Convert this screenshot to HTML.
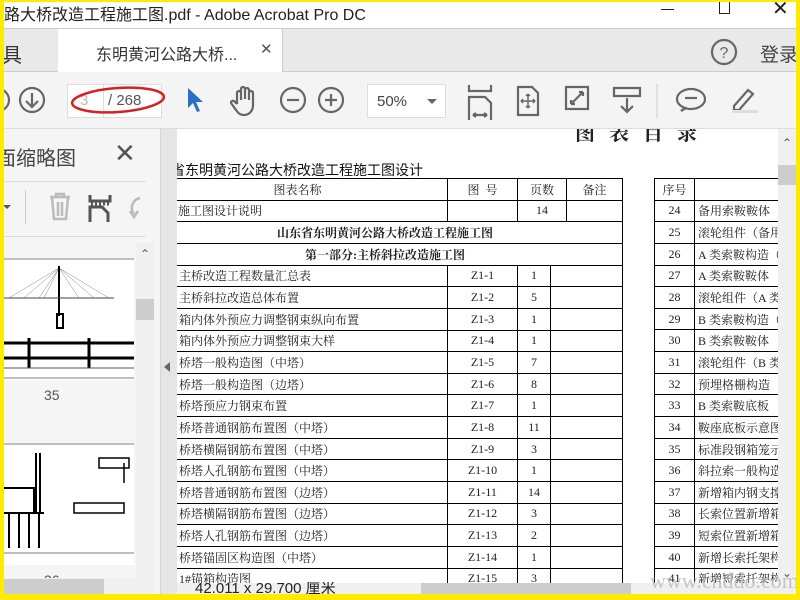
<!DOCTYPE html>
<html><head><meta charset="utf-8">
<style>
*{margin:0;padding:0;box-sizing:border-box}
body{width:800px;height:600px;overflow:hidden;background:#fff;position:relative;font-family:"Liberation Sans","Noto Sans CJK SC",sans-serif}
.a{position:absolute}
.ser{font-family:"Liberation Serif","Noto Serif CJK SC",serif}
table{border-collapse:collapse;position:absolute;table-layout:fixed}
td{border:1px solid #000;height:21.65px;font-size:12px;color:#222;padding:0;white-space:nowrap;overflow:hidden;font-family:"Liberation Serif","Noto Serif CJK SC",serif}
td.c{text-align:center}
td.b{font-weight:bold;text-align:center}
.ic{stroke:#666;fill:none;stroke-width:2.2}
</style></head><body>
<!-- title bar -->
<div class="a" style="left:0;top:0;width:800px;height:28px;background:#fff"></div>
<div class="a" style="left:4px;top:1px;font-size:16px;color:#222;white-space:nowrap">路大桥改造工程施工图.pdf - Adobe Acrobat Pro DC</div>
<div class="a" style="left:661px;top:9px;width:13px;height:1px;background:#222"></div>
<div class="a" style="left:719px;top:2px;width:11px;height:12px;border:1px solid #222;border-top:none"></div>
<div class="a" style="left:772px;top:-4px;font-size:20px;color:#222">✕</div>
<!-- tab bar -->
<div class="a" style="left:0;top:28px;width:800px;height:44px;background:#e9e9e9;border-top:1px solid #ccc;border-bottom:1px solid #ccc"></div>
<div class="a" style="left:58px;top:29px;width:225px;height:43px;background:#fff;border-right:1px solid #ccc"></div>
<div class="a" style="left:2px;top:39px;font-size:20px;color:#333">具</div>
<div class="a" style="left:96px;top:41px;font-size:16px;color:#333">东明黄河公路大桥...</div>
<div class="a" style="left:260px;top:40px;font-size:15px;color:#555">✕</div>
<svg class="a" style="left:710px;top:38px" width="28" height="28"><circle cx="14" cy="14" r="12" class="ic"/><text x="14" y="20" font-size="16" text-anchor="middle" fill="#666" font-family="Liberation Sans">?</text></svg>
<div class="a" style="left:760px;top:40px;font-size:19px;color:#444">登录</div>
<!-- toolbar -->
<div class="a" style="left:0;top:72px;width:800px;height:57px;background:#f4f4f4;border-bottom:1px solid #ddd"></div>
<svg class="a" style="left:0;top:86px" width="50" height="30"><circle cx="-2" cy="14" r="11" class="ic"/><circle cx="32" cy="14" r="12" class="ic"/><path d="M32 7v13M26 15l6 6 6-6" class="ic"/></svg>
<div class="a" style="left:67px;top:84px;width:95px;height:34px;background:#fff;border:1px solid #ddd"></div>
<div class="a" style="left:103px;top:84px;width:1px;height:34px;background:#ddd"></div>
<div class="a" style="left:80px;top:92px;font-size:15px;color:#bbb">3</div>
<div class="a" style="left:108px;top:92px;font-size:15px;color:#555">/ 268</div>
<div class="a" style="left:161px;top:84px;width:1px;height:34px;background:#ddd"></div>
<svg class="a" style="left:66px;top:80px" width="110" height="42"><ellipse cx="52" cy="20" rx="46" ry="12" fill="none" stroke="#d62020" stroke-width="2.5" transform="rotate(-4 52 20)"/></svg>
<svg class="a" style="left:185px;top:86px" width="22" height="30"><path d="M3 2 L3 22 L8 17 L12 26 L15 25 L11 16 L18 16 Z" fill="#2a6fc8"/></svg>
<svg class="a" style="left:230px;top:84px" width="30" height="34"><path d="M7 20V9a2 2 0 014 0v7V5a2 2 0 014 0v10V6a2 2 0 014 0v10V9a2 2 0 014 0v12c0 6-4 10-9 10-4 0-6-2-8-5l-5-7a2 2 0 013-2l3 3" class="ic" stroke-width="2"/></svg>
<svg class="a" style="left:279px;top:86px" width="70" height="30"><circle cx="14" cy="14" r="12" class="ic"/><path d="M8 14h12" class="ic"/><circle cx="52" cy="14" r="12" class="ic"/><path d="M46 14h12M52 8v12" class="ic"/></svg>
<div class="a" style="left:367px;top:84px;width:79px;height:34px;background:#fff;border:1px solid #ddd"></div>
<div class="a" style="left:377px;top:93px;font-size:15px;color:#444">50%</div>
<div class="a" style="left:427px;top:99px;border-left:5px solid transparent;border-right:5px solid transparent;border-top:5px solid #666"></div>
<svg class="a" style="left:466px;top:84px" width="300" height="36"><path d="M3 1v6h22V1M3 36V13h16l6 6v17M7 31h14M7 31l3-2M7 31l3 2M21 31l-3-2M21 31l-3 2" class="ic"/>
<path d="M52 3h14l6 6v22H52z" class="ic"/><path d="M62 10v14M55 17h14M62 10l-2 2M62 10l2 2M62 24l-2-2M62 24l2-2M55 17l2-2M55 17l2 2M69 17l-2-2M69 17l-2 2" stroke="#666" stroke-width="1.5" fill="none"/>
<path d="M100 3h22v22h-22z" class="ic"/><path d="M105 20l6-6M105 20v-4M105 20h4M117 8l-6 6M117 8v4M117 8h-4" class="ic"/>
<path d="M148 4h26v8h-26z" class="ic"/><path d="M161 14v14M155 22l6 6 6-6" class="ic"/>
<path d="M191 0v34" stroke="#ccc" stroke-width="1"/>
<path d="M219 24c-5-2-8-5-8-9 0-6 7-10 14-10s14 4 14 10-7 10-14 10c-2 0-4 0-5-1l-5 3z" class="ic"/><path d="M219 14h12" class="ic"/>
<path d="M268 22l14-16 5 4-14 16h-5z" class="ic"/><rect x="266" y="26" width="26" height="3" fill="#ddd"/></svg>
<!-- left panel -->
<div class="a" style="left:0;top:129px;width:160px;height:471px;background:#f5f5f5"></div>
<div class="a" style="left:160px;top:129px;width:17px;height:471px;background:#e5e5e5;border-left:1px solid #d6d6d6"></div>
<div class="a" style="left:164px;top:362px;border-top:5px solid transparent;border-bottom:5px solid transparent;border-right:6px solid #666"></div>
<div class="a" style="left:-4px;top:142px;font-size:20px;color:#444">面缩略图</div>
<div class="a" style="left:114px;top:138px;font-size:26px;color:#555;font-weight:300">✕</div>
<div class="a" style="left:4px;top:181px;width:142px;height:1px;background:#ddd"></div>
<div class="a" style="left:3px;top:205px;border-left:4px solid transparent;border-right:4px solid transparent;border-top:4px solid #555"></div>
<div class="a" style="left:25px;top:190px;width:1px;height:34px;background:#ccc"></div>
<svg class="a" style="left:44px;top:190px" width="110" height="36"><path d="M6 7h20M12 7V4h8v3M8 8l2 21h12l2-21M14 12v14M18 12v14" stroke="#bbb" stroke-width="2.5" fill="none"/>
<path d="M46 5v6h20V5M46 32V17h12l6 6v9M47 14h2M51 14h2M55 14h2M59 14h2M63 14h2" stroke="#555" stroke-width="3" fill="none"/>
<path d="M96 8a10 10 0 00-6 16M86 21l4 6 4-6" stroke="#bbb" stroke-width="2.5" fill="none"/></svg>
<div class="a" style="left:4px;top:236px;width:142px;height:1px;background:#ddd"></div>
<div class="a" style="left:4px;top:243px;width:132px;height:335px;background:#f5f5f5"></div>
<!-- thumbnails -->
<svg class="a" style="left:4px;top:258px" width="130" height="122"><rect width="130" height="122" fill="#fff"/><path d="M0 1h130M0 120h130" stroke="#999" stroke-width="1.2"/>
<g stroke="#888" stroke-width="0.5" fill="none"><path d="M55 10L5 40M55 10L20 40M55 10L35 40M55 10L105 40M55 10L90 40M55 10L75 40M55 10L40 40"/></g>
<path d="M55 8v50M53 56h6v14h-6z" stroke="#000" stroke-width="2" fill="none"/><path d="M0 40h110" stroke="#444"/>
<path d="M0 85h130M0 100h130" stroke="#000" stroke-width="3"/><path d="M25 80v30M85 80v30" stroke="#000" stroke-width="3"/><path d="M0 110h130" stroke="#555"/></svg>
<div class="a" style="left:44px;top:387px;font-size:14px;color:#555">35</div>
<svg class="a" style="left:4px;top:443px" width="130" height="122"><rect width="130" height="122" fill="#fff"/><path d="M0 1h130M0 110h130" stroke="#999" stroke-width="1.2"/>
<path d="M32 10v60M36 10v60M0 70h40M5 70v35M15 70v35M25 70v35M35 70v35M0 45h30v25" stroke="#000" stroke-width="2" fill="none"/>
<path d="M95 15h30v10h-30zM70 60h50v10H70zM120 20v20" stroke="#000" stroke-width="1.5" fill="none"/></svg>
<div class="a" style="left:44px;top:572px;font-size:14px;color:#555">36</div>
<div class="a" style="left:136px;top:243px;width:18px;height:336px;background:#f0f0f0"></div>
<div class="a" style="left:140px;top:247px;font-size:12px;color:#555">⌃</div>
<div class="a" style="left:136px;top:299px;width:18px;height:21px;background:#cdcdcd"></div>
<div class="a" style="left:4px;top:578px;width:150px;height:16px;background:#f0f0f0"></div>
<div class="a" style="left:4px;top:579px;width:100px;height:15px;background:#cdcdcd"></div>
<!-- document area -->
<div class="a" style="left:177px;top:129px;width:601px;height:454px;background:#fff;overflow:hidden">
  <div class="a ser" style="left:398px;top:-12px;font-size:20px;font-weight:bold;color:#222;letter-spacing:14px;white-space:nowrap">图表目录</div>
  <div class="a" style="left:-6px;top:31px;font-size:14px;color:#111;white-space:nowrap">省东明黄河公路大桥改造工程施工图设计</div>
  <table style="left:-30px;top:49px;width:475px">
    <colgroup><col style="width:300px"><col style="width:70px"><col style="width:49px"><col style="width:56px"></colgroup>
    <tr><td class="c">图表名称</td><td class="c">图&nbsp;&nbsp;号</td><td class="c">页数</td><td class="c">备注</td></tr>
    <tr><td style="padding-left:30px">施工图设计说明</td><td></td><td class="c">14</td><td></td></tr>
    <tr><td colspan="4" class="b">山东省东明黄河公路大桥改造工程施工图</td></tr>
    <tr><td colspan="4" class="b">第一部分:主桥斜拉改造施工图</td></tr>
  </table>
  <table style="left:-30px;top:135.6px;width:475px">
    <colgroup><col style="width:300px"><col style="width:70px"><col style="width:33px"><col style="width:72px"></colgroup>
    <tr><td style="padding-left:31px">主桥改造工程数量汇总表</td><td class="c">Z1-1</td><td class="c">1</td><td></td></tr>
    <tr><td style="padding-left:31px">主桥斜拉改造总体布置</td><td class="c">Z1-2</td><td class="c">5</td><td></td></tr>
    <tr><td style="padding-left:31px">箱内体外预应力调整钢束纵向布置</td><td class="c">Z1-3</td><td class="c">1</td><td></td></tr>
    <tr><td style="padding-left:31px">箱内体外预应力调整钢束大样</td><td class="c">Z1-4</td><td class="c">1</td><td></td></tr>
    <tr><td style="padding-left:31px">桥塔一般构造图（中塔）</td><td class="c">Z1-5</td><td class="c">7</td><td></td></tr>
    <tr><td style="padding-left:31px">桥塔一般构造图（边塔）</td><td class="c">Z1-6</td><td class="c">8</td><td></td></tr>
    <tr><td style="padding-left:31px">桥塔预应力钢束布置</td><td class="c">Z1-7</td><td class="c">1</td><td></td></tr>
    <tr><td style="padding-left:31px">桥塔普通钢筋布置图（中塔）</td><td class="c">Z1-8</td><td class="c">11</td><td></td></tr>
    <tr><td style="padding-left:31px">桥塔横隔钢筋布置图（中塔）</td><td class="c">Z1-9</td><td class="c">3</td><td></td></tr>
    <tr><td style="padding-left:31px">桥塔人孔钢筋布置图（中塔）</td><td class="c">Z1-10</td><td class="c">1</td><td></td></tr>
    <tr><td style="padding-left:31px">桥塔普通钢筋布置图（边塔）</td><td class="c">Z1-11</td><td class="c">14</td><td></td></tr>
    <tr><td style="padding-left:31px">桥塔横隔钢筋布置图（边塔）</td><td class="c">Z1-12</td><td class="c">3</td><td></td></tr>
    <tr><td style="padding-left:31px">桥塔人孔钢筋布置图（边塔）</td><td class="c">Z1-13</td><td class="c">2</td><td></td></tr>
    <tr><td style="padding-left:31px">桥塔锚固区构造图（中塔）</td><td class="c">Z1-14</td><td class="c">1</td><td></td></tr>
    <tr><td style="padding-left:31px">1#锚箱构造图</td><td class="c">Z1-15</td><td class="c">3</td><td></td></tr>
  </table>
  <table style="left:477px;top:49px;width:160px">
    <colgroup><col style="width:40px"><col style="width:120px"></colgroup>
    <tr><td class="c">序号</td><td></td></tr>
    <tr><td class="c">24</td><td>&nbsp;备用索鞍鞍体</td></tr>
    <tr><td class="c">25</td><td>&nbsp;滚轮组件（备用</td></tr>
    <tr><td class="c">26</td><td>&nbsp;A 类索鞍构造（</td></tr>
    <tr><td class="c">27</td><td>&nbsp;A 类索鞍鞍体</td></tr>
    <tr><td class="c">28</td><td>&nbsp;滚轮组件（A 类</td></tr>
    <tr><td class="c">29</td><td>&nbsp;B 类索鞍构造（</td></tr>
    <tr><td class="c">30</td><td>&nbsp;B 类索鞍鞍体</td></tr>
    <tr><td class="c">31</td><td>&nbsp;滚轮组件（B 类</td></tr>
    <tr><td class="c">32</td><td>&nbsp;预埋格栅构造</td></tr>
    <tr><td class="c">33</td><td>&nbsp;B 类索鞍底板</td></tr>
    <tr><td class="c">34</td><td>&nbsp;鞍座底板示意图</td></tr>
    <tr><td class="c">35</td><td>&nbsp;标准段钢箱笼示</td></tr>
    <tr><td class="c">36</td><td>&nbsp;斜拉索一般构造</td></tr>
    <tr><td class="c">37</td><td>&nbsp;新增箱内钢支撑</td></tr>
    <tr><td class="c">38</td><td>&nbsp;长索位置新增箱</td></tr>
    <tr><td class="c">39</td><td>&nbsp;短索位置新增箱</td></tr>
    <tr><td class="c">40</td><td>&nbsp;新增长索托架构</td></tr>
    <tr><td class="c">41</td><td>&nbsp;新增短索托架构</td></tr>
  </table>
</div>
<!-- right scrollbar -->
<div class="a" style="left:778px;top:129px;width:18px;height:465px;background:#f0f0f0"></div>
<div class="a" style="left:782px;top:136px;font-size:12px;color:#555">⌃</div>
<div class="a" style="left:778px;top:165px;width:18px;height:20px;background:#cdcdcd"></div>
<div class="a" style="left:782px;top:566px;font-size:12px;color:#555">⌄</div>
<!-- bottom status -->
<div class="a" style="left:177px;top:583px;width:601px;height:11px;background:#f0f0f0;overflow:hidden"></div>
<div class="a" style="left:195px;top:582px;font-size:15px;color:#222;line-height:14px;height:12px;overflow:hidden">42.011 x 29.700 厘米</div>
<div class="a" style="left:421px;top:583px;width:210px;height:11px;background:#cdcdcd"></div>
<div class="a" style="left:650px;top:568px;font-size:22px;color:#bbb;font-family:'Liberation Serif',serif;opacity:0.8">www.cnddo.com</div>
<!-- yellow frame -->
<div class="a" style="left:0;top:0;width:4px;height:600px;background:#ffeb00"></div>
<div class="a" style="left:0;top:0;width:800px;height:2px;background:#ffeb00"></div>
<div class="a" style="left:796px;top:0;width:4px;height:600px;background:#ffeb00"></div>
<div class="a" style="left:0;top:594px;width:800px;height:6px;background:#ffeb00"></div>
</body></html>
